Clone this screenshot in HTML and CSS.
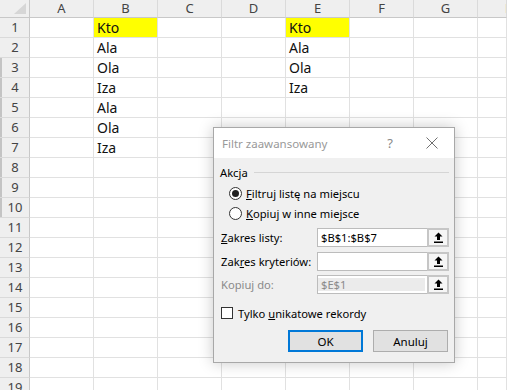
FILE: index.html
```html
<!DOCTYPE html>
<html lang="pl">
<head>
  <meta charset="UTF-8">
  <title>Filtr zaawansowany</title>
  <link rel="stylesheet" href="styles.css">
</head>
<body>

  <div class="sheet">
    <div class="corner"><span class="tri"></span></div><div class="ch">A</div><div class="ch">B</div><div class="ch">C</div><div class="ch">D</div><div class="ch">E</div><div class="ch">F</div><div class="ch">G</div><div class="ch cut">H</div>
    <div class="rh">1</div><div class="c"></div><div class="c hl">Kto</div><div class="c"></div><div class="c"></div><div class="c hl">Kto</div><div class="c"></div><div class="c"></div><div class="c"></div>
    <div class="rh">2</div><div class="c"></div><div class="c">Ala</div><div class="c"></div><div class="c"></div><div class="c">Ala</div><div class="c"></div><div class="c"></div><div class="c"></div>
    <div class="rh mark">3</div><div class="c"></div><div class="c">Ola</div><div class="c"></div><div class="c"></div><div class="c">Ola</div><div class="c"></div><div class="c"></div><div class="c"></div>
    <div class="rh mark">4</div><div class="c"></div><div class="c">Iza</div><div class="c"></div><div class="c"></div><div class="c">Iza</div><div class="c"></div><div class="c"></div><div class="c"></div>
    <div class="rh mark">5</div><div class="c"></div><div class="c">Ala</div><div class="c"></div><div class="c"></div><div class="c"></div><div class="c"></div><div class="c"></div><div class="c"></div>
    <div class="rh mark">6</div><div class="c"></div><div class="c">Ola</div><div class="c"></div><div class="c"></div><div class="c"></div><div class="c"></div><div class="c"></div><div class="c"></div>
    <div class="rh mark">7</div><div class="c"></div><div class="c">Iza</div><div class="c"></div><div class="c"></div><div class="c"></div><div class="c"></div><div class="c"></div><div class="c"></div>
    <div class="rh mark">8</div><div class="c"></div><div class="c"></div><div class="c"></div><div class="c"></div><div class="c"></div><div class="c"></div><div class="c"></div><div class="c"></div>
    <div class="rh mark">9</div><div class="c"></div><div class="c"></div><div class="c"></div><div class="c"></div><div class="c"></div><div class="c"></div><div class="c"></div><div class="c"></div>
    <div class="rh mark">10</div><div class="c"></div><div class="c"></div><div class="c"></div><div class="c"></div><div class="c"></div><div class="c"></div><div class="c"></div><div class="c"></div>
    <div class="rh">11</div><div class="c"></div><div class="c"></div><div class="c"></div><div class="c"></div><div class="c"></div><div class="c"></div><div class="c"></div><div class="c"></div>
    <div class="rh">12</div><div class="c"></div><div class="c"></div><div class="c"></div><div class="c"></div><div class="c"></div><div class="c"></div><div class="c"></div><div class="c"></div>
    <div class="rh">13</div><div class="c"></div><div class="c"></div><div class="c"></div><div class="c"></div><div class="c"></div><div class="c"></div><div class="c"></div><div class="c"></div>
    <div class="rh">14</div><div class="c"></div><div class="c"></div><div class="c"></div><div class="c"></div><div class="c"></div><div class="c"></div><div class="c"></div><div class="c"></div>
    <div class="rh">15</div><div class="c"></div><div class="c"></div><div class="c"></div><div class="c"></div><div class="c"></div><div class="c"></div><div class="c"></div><div class="c"></div>
    <div class="rh">16</div><div class="c"></div><div class="c"></div><div class="c"></div><div class="c"></div><div class="c"></div><div class="c"></div><div class="c"></div><div class="c"></div>
    <div class="rh">17</div><div class="c"></div><div class="c"></div><div class="c"></div><div class="c"></div><div class="c"></div><div class="c"></div><div class="c"></div><div class="c"></div>
    <div class="rh">18</div><div class="c"></div><div class="c"></div><div class="c"></div><div class="c"></div><div class="c"></div><div class="c"></div><div class="c"></div><div class="c"></div>
    <div class="rh">19</div><div class="c"></div><div class="c"></div><div class="c"></div><div class="c"></div><div class="c"></div><div class="c"></div><div class="c"></div><div class="c"></div>
  </div>

  <div class="dialog">
    <div class="dlg-title">
      <span class="dlg-name">Filtr zaawansowany</span>
      <span class="dlg-help">?</span>
      <span class="dlg-close">
        <svg width="12" height="12" viewBox="0 0 12 12"><path d="M0.5 0.5 L11.5 11.5 M11.5 0.5 L0.5 11.5" stroke="#707070" stroke-width="1" fill="none"/></svg>
      </span>
    </div>
    <div class="dlg-body">
      <div class="group-head"><span>Akcja</span><span class="group-line"></span></div>
      <label class="opt"><span class="radio checked"></span><span><u>F</u>iltruj listę na miejscu</span></label>
      <label class="opt"><span class="radio"></span><span><u>K</u>opiuj w inne miejsce</span></label>

      <div class="frow first">
        <span class="flabel"><u>Z</u>akres listy:</span>
        <span class="field"><span class="fval">$B$1:$B$7</span><span class="fbtn"><svg width="9" height="11" viewBox="0 0 9 11"><path d="M4.5 0.5 L8.5 4.5 L6 4.5 L6 8 L3 8 L3 4.5 L0.5 4.5 Z" fill="#000"/><rect x="0" y="9.5" width="9" height="1.5" fill="#000"/></svg></span></span>
      </div>
      <div class="frow">
        <span class="flabel">Zak<u>r</u>es kryteriów:</span>
        <span class="field"><span class="fval"></span><span class="fbtn"><svg width="9" height="11" viewBox="0 0 9 11"><path d="M4.5 0.5 L8.5 4.5 L6 4.5 L6 8 L3 8 L3 4.5 L0.5 4.5 Z" fill="#000"/><rect x="0" y="9.5" width="9" height="1.5" fill="#000"/></svg></span></span>
      </div>
      <div class="frow disabled">
        <span class="flabel">Kopiuj do:</span>
        <span class="field"><span class="fval">$E$1</span><span class="fbtn"><svg width="9" height="11" viewBox="0 0 9 11"><path d="M4.5 0.5 L8.5 4.5 L6 4.5 L6 8 L3 8 L3 4.5 L0.5 4.5 Z" fill="#000"/><rect x="0" y="9.5" width="9" height="1.5" fill="#000"/></svg></span></span>
      </div>

      <label class="chk-row"><span class="chk"></span><span>Tylko <u>u</u>nikatowe rekordy</span></label>

      <div class="buttons">
        <button class="btn default">OK</button>
        <button class="btn">Anuluj</button>
      </div>
    </div>
  </div>

</body>
</html>
```

FILE: styles.css
```css
body {
  margin: 0;
  width: 507px;
  height: 390px;
  overflow: hidden;
  background: #fff;
  font-family: "Noto Sans", sans-serif;
  position: relative;
}

/* sheet grid */
.sheet {
  display: grid;
  grid-template-columns: 30px repeat(7, 64px) 29px;
  grid-template-rows: 18px;
  grid-auto-rows: 20px;
  height: 390px;
  overflow: hidden;
}

.sheet > div {
  box-sizing: border-box;
  border-right: 1px solid #e1e1e1;
  border-bottom: 1px solid #e1e1e1;
  white-space: nowrap;
  overflow: hidden;
}

.corner {
  background: #efefef;
  position: relative;
  border-right-color: #c8c8c8 !important;
  border-bottom-color: #c8c8c8 !important;
}

.tri {
  position: absolute;
  left: 14px;
  top: 3px;
  width: 12px;
  height: 11px;
  background: #d6d6d6;
  clip-path: polygon(100% 0, 100% 100%, 0 100%);
}

.ch {
  background: #efefef;
  border-bottom-color: #c8c8c8 !important;
  border-right-color: #dadada !important;
  color: #444;
  font-size: 13px;
  line-height: 17px;
  text-align: center;
}

.ch.cut {
  text-align: left;
  padding-left: 27px;
}

.rh {
  background: #efefef;
  border-right-color: #c8c8c8 !important;
  border-bottom-color: #dadada !important;
  color: #444;
  font-size: 13px;
  line-height: 19px;
  text-align: center;
  padding-left: 1px;
}

.rh.mark {
  box-shadow: inset 2px 0 0 #c4c4c4;
}

.c {
  font-size: 14px;
  line-height: 19px;
  padding-left: 3px;
  color: #111;
}

.c.hl {
  background: #ffff00;
}

/* dialog window */
.dialog {
  position: absolute;
  left: 213px;
  top: 127px;
  width: 242px;
  height: 236px;
  box-sizing: border-box;
  border: 1px solid #a8a8a8;
  background: #f0f0f0;
  box-shadow: 0 0 14px rgba(0, 0, 0, 0.22);
  font-size: 11.2px;
  color: #000;
  white-space: nowrap;
}

.dlg-title {
  height: 30px;
  background: #fff;
  display: flex;
  align-items: center;
  padding-left: 8px;
  color: #999;
  font-size: 11.5px;
}

.dlg-name {
  flex: 1;
}

.dlg-help {
  width: 20px;
  margin-right: 26px;
  text-align: center;
  color: #888;
  font-size: 13px;
}

.dlg-close {
  width: 12px;
  margin-right: 16px;
  display: flex;
}

.dlg-body {
  padding: 6px 5px 0 6px;
}

.group-head {
  display: flex;
  align-items: center;
  height: 16px;
}

.group-line {
  flex: 1;
  height: 1px;
  background: #d5d5d5;
  margin-left: 6px;
}

.opt {
  display: flex;
  align-items: center;
  height: 20px;
  padding-left: 9px;
}

.opt:first-of-type {
  margin-top: 3px;
}

.radio {
  width: 13px;
  height: 13px;
  box-sizing: border-box;
  border: 1px solid #333;
  border-radius: 50%;
  background: #fff;
  margin-right: 4px;
  display: flex;
  align-items: center;
  justify-content: center;
}

.radio.checked::after {
  content: "";
  width: 7px;
  height: 7px;
  border-radius: 50%;
  background: #222;
}

.frow {
  display: flex;
  align-items: center;
  height: 19px;
  margin-top: 5px;
}

.frow.first {
  margin-top: 5px;
}

.frow.disabled {
  margin-top: 4px;
  color: #8a8a8a;
}

.flabel {
  width: 96px;
  padding-left: 1px;
}

.field {
  flex: 1;
  display: flex;
  height: 19px;
  box-sizing: border-box;
  border: 1px solid #bcbcbc;
  background: #fff;
}

.fval {
  flex: 1;
  padding-left: 3px;
  line-height: 17px;
}

.disabled .fval {
  background: #ebebeb;
  margin: 2px 2px 2px 0;
  line-height: 13px;
}

.fbtn {
  width: 22px;
  box-sizing: border-box;
  border: 2px solid #c6c6c6;
  margin: -1px -1px -1px 0;
  height: 19px;
  background: #f6f6f6;
  display: flex;
  align-items: center;
  justify-content: center;
}

.chk-row {
  display: flex;
  align-items: center;
  margin-top: 11px;
  height: 16px;
  padding-left: 1px;
}

.chk {
  width: 12px;
  height: 12px;
  box-sizing: border-box;
  border: 1px solid #333;
  background: #fff;
  margin-right: 5px;
}

.buttons {
  display: flex;
  justify-content: flex-end;
  gap: 10px;
  margin-top: 9px;
  padding-right: 1px;
}

.btn {
  width: 75px;
  height: 22px;
  box-sizing: border-box;
  border: 1px solid #adadad;
  background: #e1e1e1;
  font-family: "Noto Sans", sans-serif;
  font-size: 11.5px;
  padding: 0;
}

.btn.default {
  border: 2px solid #0078d7;
}
```
